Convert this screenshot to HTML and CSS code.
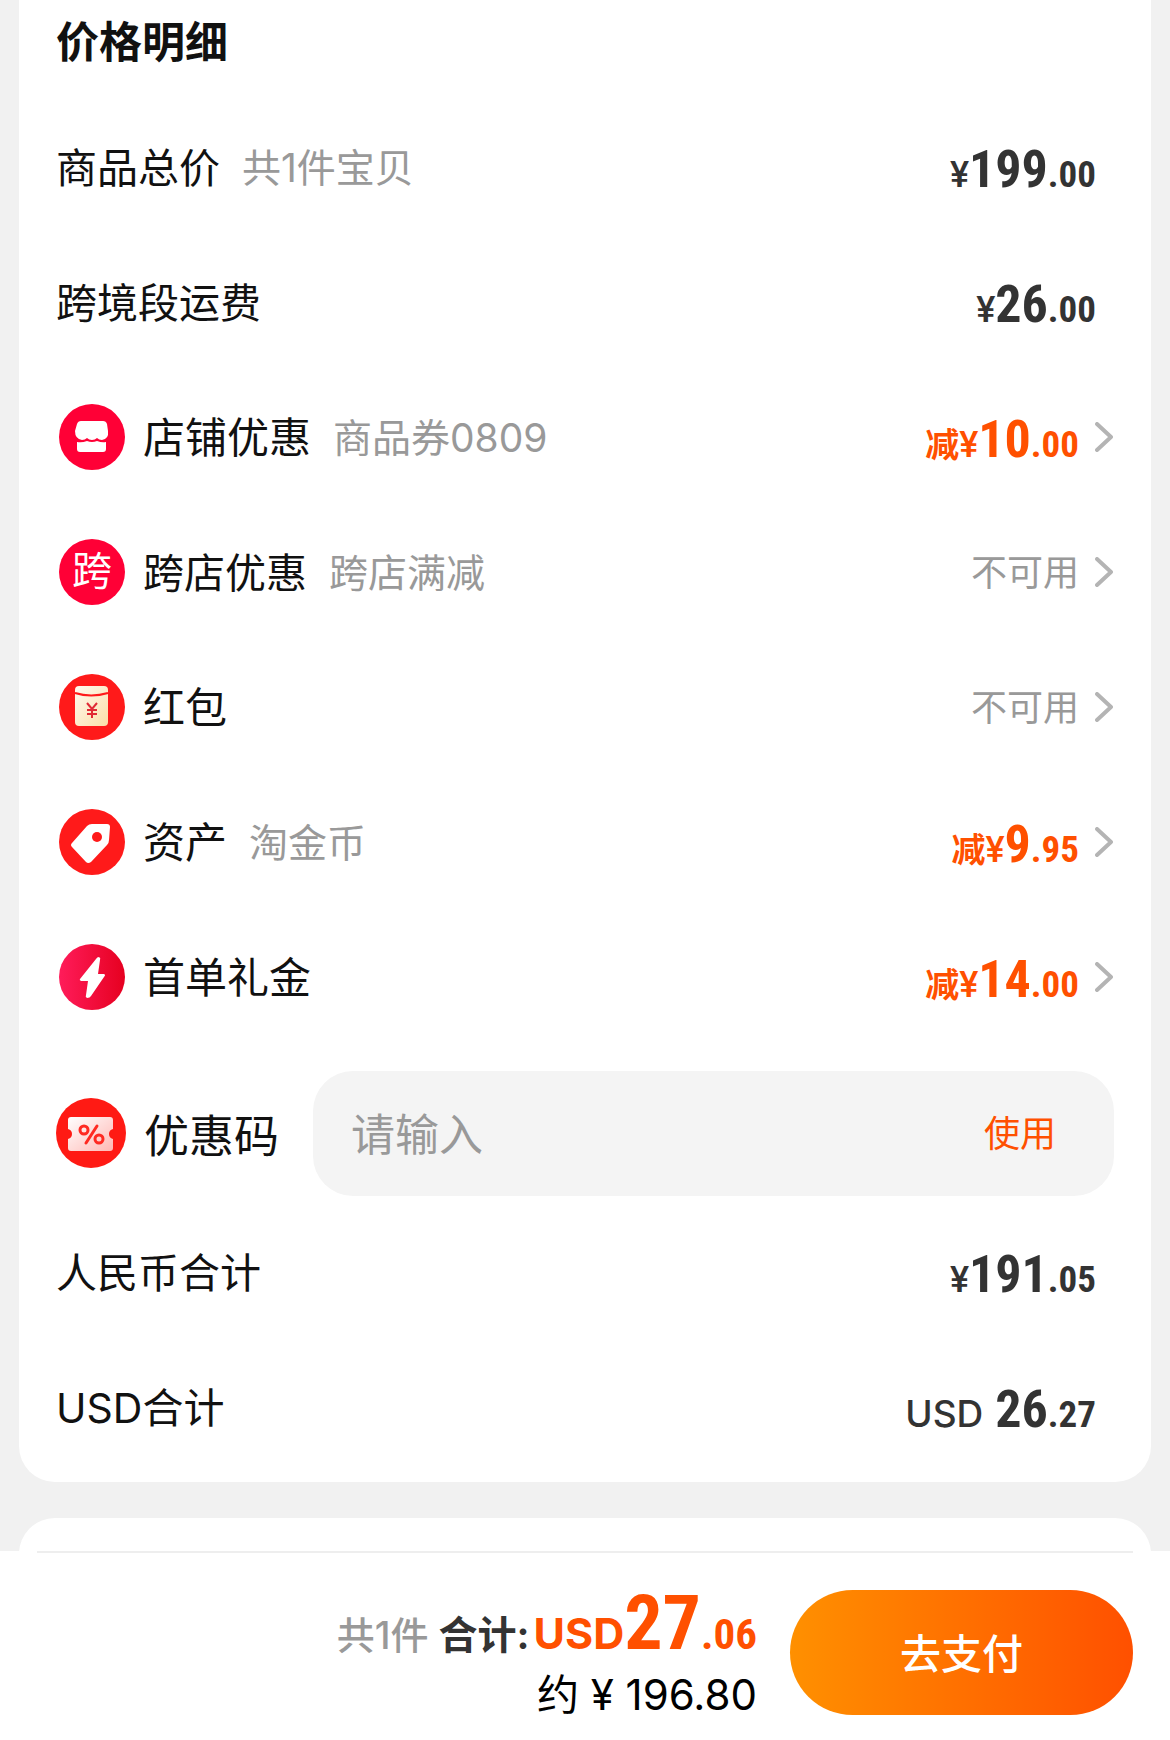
FILE: index.html
```html
<!DOCTYPE html>
<html lang="zh-CN">
  <head>
    <meta charset="UTF-8" />
    <meta name="viewport" content="width=device-width, initial-scale=1" />
    <title>价格明细</title>
    <link rel="stylesheet" href="styles.css">
  </head>
  <body>
    <main class="content">
      <section class="card">
        <h1 class="title">价格明细</h1>

        <div class="row">
          <span class="label">商品总价</span>
          <span class="note">共1件宝贝</span>
          <span class="price"><span class="unit">¥</span>199<span class="decimal">.00</span></span>
        </div>

        <div class="row">
          <span class="label">跨境段运费</span>
          <span class="price"><span class="unit">¥</span>26<span class="decimal">.00</span></span>
        </div>

        <!-- Discounts -->
        <a href="#shop" class="row row-link">
          <svg class="icon" viewBox="0 0 66 66" aria-hidden="true">
            <circle cx="33" cy="33" r="33" fill="#ff0036" />
            <path d="M22 17h22q3 0 4 3l1 7q1 8-6 9-3 0-5-2-2 2-5 2t-5-2q-2 2-5 2-7-1-7-9l2-7q1-3 4-3z" fill="#fff" />
            <path d="M18 38q5 1 10-1 5 2 10 0 5 2 9 1v7q0 3-3 3H21q-3 0-3-3z" fill="#fff" />
          </svg>
          <span class="label label-large">店铺优惠</span>
          <span class="note">商品券0809</span>
          <span class="price discount"><span class="minus">减</span><span class="unit">¥</span>10<span class="decimal">.00</span></span>
          <svg class="arrow" viewBox="0 0 18 30" aria-hidden="true"><path d="M2 2l14 13L2 28" /></svg>
        </a>

        <a href="#cross-shop" class="row row-link">
          <span class="icon icon-text" aria-hidden="true">跨</span>
          <span class="label">跨店优惠</span>
          <span class="note">跨店满减</span>
          <span class="unavailable">不可用</span>
          <svg class="arrow" viewBox="0 0 18 30" aria-hidden="true"><path d="M2 2l14 13L2 28" /></svg>
        </a>

        <a href="#red-packet" class="row row-link">
          <svg class="icon" viewBox="0 0 66 66" aria-hidden="true">
            <defs>
              <linearGradient id="packet" x1="0" y1="0" x2="1" y2="1">
                <stop offset="0" stop-color="#fffaf0" />
                <stop offset="1" stop-color="#fbdfa8" />
              </linearGradient>
            </defs>
            <circle cx="33" cy="33" r="33" fill="#ff1a1a" />
            <rect x="16" y="12" width="33" height="40" rx="4" fill="url(#packet)" />
            <path d="M16 19q16 5 33 0" fill="none" stroke="#ff1a1a" stroke-width="2" />
            <path d="M28 29l5 6 5-6M33 35v9M28 36h10M28 40h10" fill="none" stroke="#e02a35" stroke-width="2" />
          </svg>
          <span class="label label-large">红包</span>
          <span class="unavailable">不可用</span>
          <svg class="arrow" viewBox="0 0 18 30" aria-hidden="true"><path d="M2 2l14 13L2 28" /></svg>
        </a>

        <a href="#assets" class="row row-link">
          <svg class="icon" viewBox="0 0 66 66" aria-hidden="true">
            <circle cx="33" cy="33" r="33" fill="#ff1a1a" />
            <path d="M33 15h15q3 0 3 3l-1 13q0 3-2 5L32 53q-3 2-5 0L13 38q-2-2 0-4L28 17q2-2 5-2z" fill="#fff" />
            <circle cx="38" cy="28" r="5" fill="#ff1a1a" />
          </svg>
          <span class="label label-large">资产</span>
          <span class="note">淘金币</span>
          <span class="price discount"><span class="minus">减</span><span class="unit">¥</span>9<span class="decimal">.95</span></span>
          <svg class="arrow" viewBox="0 0 18 30" aria-hidden="true"><path d="M2 2l14 13L2 28" /></svg>
        </a>

        <a href="#first-order" class="row row-link">
          <svg class="icon" viewBox="0 0 66 66" aria-hidden="true">
            <defs>
              <linearGradient id="bolt" x1="0" y1="0" x2="1" y2="0">
                <stop offset="0" stop-color="#ff1c5a" />
                <stop offset="1" stop-color="#e60020" />
              </linearGradient>
            </defs>
            <circle cx="33" cy="33" r="33" fill="url(#bolt)" />
            <path d="M37 15q1-2 3-2 2 1 1 3l-2 14h6q2 1 0 3L32 52q-1 2-4 2-2-1-1-3l2-14h-7q-2-1-1-2z" fill="#fff" />
          </svg>
          <span class="label label-large">首单礼金</span>
          <span class="price discount"><span class="minus">减</span><span class="unit">¥</span>14<span class="decimal">.00</span></span>
          <svg class="arrow" viewBox="0 0 18 30" aria-hidden="true"><path d="M2 2l14 13L2 28" /></svg>
        </a>

        <!-- Promo code -->
        <form class="row row-code">
          <svg class="icon icon-code" viewBox="0 0 70 70" aria-hidden="true">
            <defs>
              <linearGradient id="ticket" x1="0" y1="0" x2="1" y2="1">
                <stop offset="0" stop-color="#ffffff" />
                <stop offset="1" stop-color="#ffb8b4" />
              </linearGradient>
            </defs>
            <circle cx="35" cy="35" r="35" fill="#ff1a14" />
            <path d="M15 19h39q3 0 3 3v9q-4 1-4 5t4 5v9q0 3-3 3H15q-3 0-3-3v-9q4-1 4-5t-4-5v-9q0-3 3-3z" fill="url(#ticket)" />
            <path d="M41 28L30 45" stroke="#ff2a22" stroke-width="3" stroke-linecap="round" />
            <circle cx="28" cy="32" r="4" fill="none" stroke="#ff2a22" stroke-width="3" />
            <circle cx="43" cy="41" r="4" fill="none" stroke="#ff2a22" stroke-width="3" />
          </svg>
          <label for="code" class="label-code">优惠码</label>
          <div class="code-box">
            <input type="text" id="code" class="code-input" placeholder="请输入" />
            <button type="button" class="code-button">使用</button>
          </div>
        </form>

        <div class="row">
          <span class="label">人民币合计</span>
          <span class="price"><span class="unit">¥</span>191<span class="decimal">.05</span></span>
        </div>

        <div class="row">
          <span class="label">USD合计</span>
          <span class="price"><span class="currency">USD</span>26<span class="decimal">.27</span></span>
        </div>
      </section>

      <section class="card card-next"></section>
    </main>

    <footer class="pay-bar">
      <div class="summary">
        <p class="total">
          <span class="count">共1件</span>
          <span class="total-label">合计:</span>
          <span class="total-price"><span class="total-currency">USD</span>27<span class="total-decimal">.06</span></span>
        </p>
        <p class="about">约 ¥ 196.80</p>
      </div>
      <button type="button" class="pay-button">去支付</button>
    </footer>
  </body>
</html>
```

FILE: styles.css
```css
* {
  box-sizing: border-box;
}
body {
  display: flex;
  flex-direction: column;
  height: 100vh;
  margin: 0;
  background-color: #f1f1f1;
  color: #111;
  font-family: Inter, "Noto Sans CJK SC", sans-serif;
}
button,
input {
  font-family: inherit;
}
.content {
  flex: 1;
  min-height: 0;
  overflow: hidden;
  padding: 0 19px;
}
.card {
  background-color: white;
  border-radius: 0 0 36px 36px;
  padding: 0 37px 8px;
}
.card-next {
  height: 120px;
  margin-top: 36px;
  border-radius: 36px;
}
.title {
  margin: 0 0 15px;
  font-size: 43px;
  font-weight: bold;
  line-height: 84px;
}
.row {
  display: flex;
  align-items: center;
  height: 135px;
  padding-right: 18px;
  color: inherit;
  text-decoration: none;
}
.row-link {
  padding: 0 1px 0 3px;
}
.row-code {
  height: 160px;
  padding: 18px 0 0;
}
.icon {
  flex: none;
  width: 66px;
  height: 66px;
  margin-right: 18px;
}
.icon-text {
  border-radius: 50%;
  background-color: #ff0036;
  color: white;
  font-size: 40px;
  line-height: 64px;
  text-align: center;
}
.icon-code {
  width: 70px;
  height: 70px;
}
.label,
.note,
.unavailable {
  padding-bottom: 4px;
}
.label {
  font-size: 41px;
}
.label-large {
  font-size: 42px;
}
.label-code {
  font-size: 45px;
}
.note {
  margin-left: 22px;
  color: #999;
  font-size: 39px;
}

/* Prices */
.price {
  margin-left: auto;
  padding-top: 6px;
  color: #333;
  font-family: "Roboto Condensed", Roboto, "Noto Sans CJK SC", sans-serif;
  font-size: 52px;
  font-weight: bold;
}
.unit {
  font-family: Roboto, sans-serif;
  font-size: 36px;
  font-weight: 500;
}
.decimal {
  font-size: 37px;
}
.minus {
  font-size: 34px;
}
.currency {
  margin-right: 12px;
  font-family: Inter, sans-serif;
  font-size: 37px;
  font-weight: 500;
}
.discount {
  color: #ff5000;
}
.unavailable {
  margin-left: auto;
  color: #999;
  font-size: 36px;
}
.arrow {
  flex: none;
  width: 18px;
  height: 30px;
  margin-left: 16px;
  fill: none;
  stroke: #b4b4b4;
  stroke-width: 4;
  stroke-linecap: round;
  stroke-linejoin: round;
}

/* Promo code box */
.code-box {
  flex: 1;
  display: flex;
  align-items: center;
  min-width: 0;
  height: 125px;
  margin-left: 34px;
  padding: 0 58px 0 38px;
  border-radius: 40px;
  background-color: #f4f4f4;
}
.code-input {
  flex: 1;
  min-width: 0;
  padding: 4px 0 0;
  border: none;
  outline: none;
  background: none;
  font-size: 44px;
}
.code-input::placeholder {
  color: #999;
}
.code-button {
  padding: 0 0 4px;
  border: none;
  background: none;
  color: #ff5000;
  font-size: 36px;
  cursor: pointer;
}

/* Bottom bar */
.pay-bar {
  display: flex;
  justify-content: flex-end;
  align-items: center;
  height: 189px;
  padding: 14px 37px 0;
  background: linear-gradient(#eee, #eee) center top / calc(100% - 74px) 2px no-repeat white;
}
.summary {
  text-align: right;
}
.total,
.about {
  margin: 0;
}
.total {
  display: flex;
  align-items: baseline;
  justify-content: flex-end;
  line-height: 72px;
}
.count {
  margin-right: 10px;
  color: #999;
  font-size: 38px;
  font-weight: 500;
}
.total-label {
  margin-right: 4px;
  color: #333;
  font-size: 39px;
  font-weight: bold;
}
.total-price {
  color: #ff5000;
  font-family: "Roboto Condensed", Roboto, sans-serif;
  font-size: 76px;
  font-weight: bold;
}
.total-currency {
  font-family: Inter, sans-serif;
  font-size: 43px;
}
.total-decimal {
  font-size: 43px;
}
.about {
  color: black;
  font-size: 42px;
  line-height: 48px;
}
.pay-button {
  width: 343px;
  height: 125px;
  margin-left: 33px;
  padding: 0 0 4px;
  border: none;
  border-radius: 63px;
  background: linear-gradient(to right, #ff9000, #ff5000);
  color: white;
  font-size: 41px;
  font-weight: 500;
  cursor: pointer;
}
```
